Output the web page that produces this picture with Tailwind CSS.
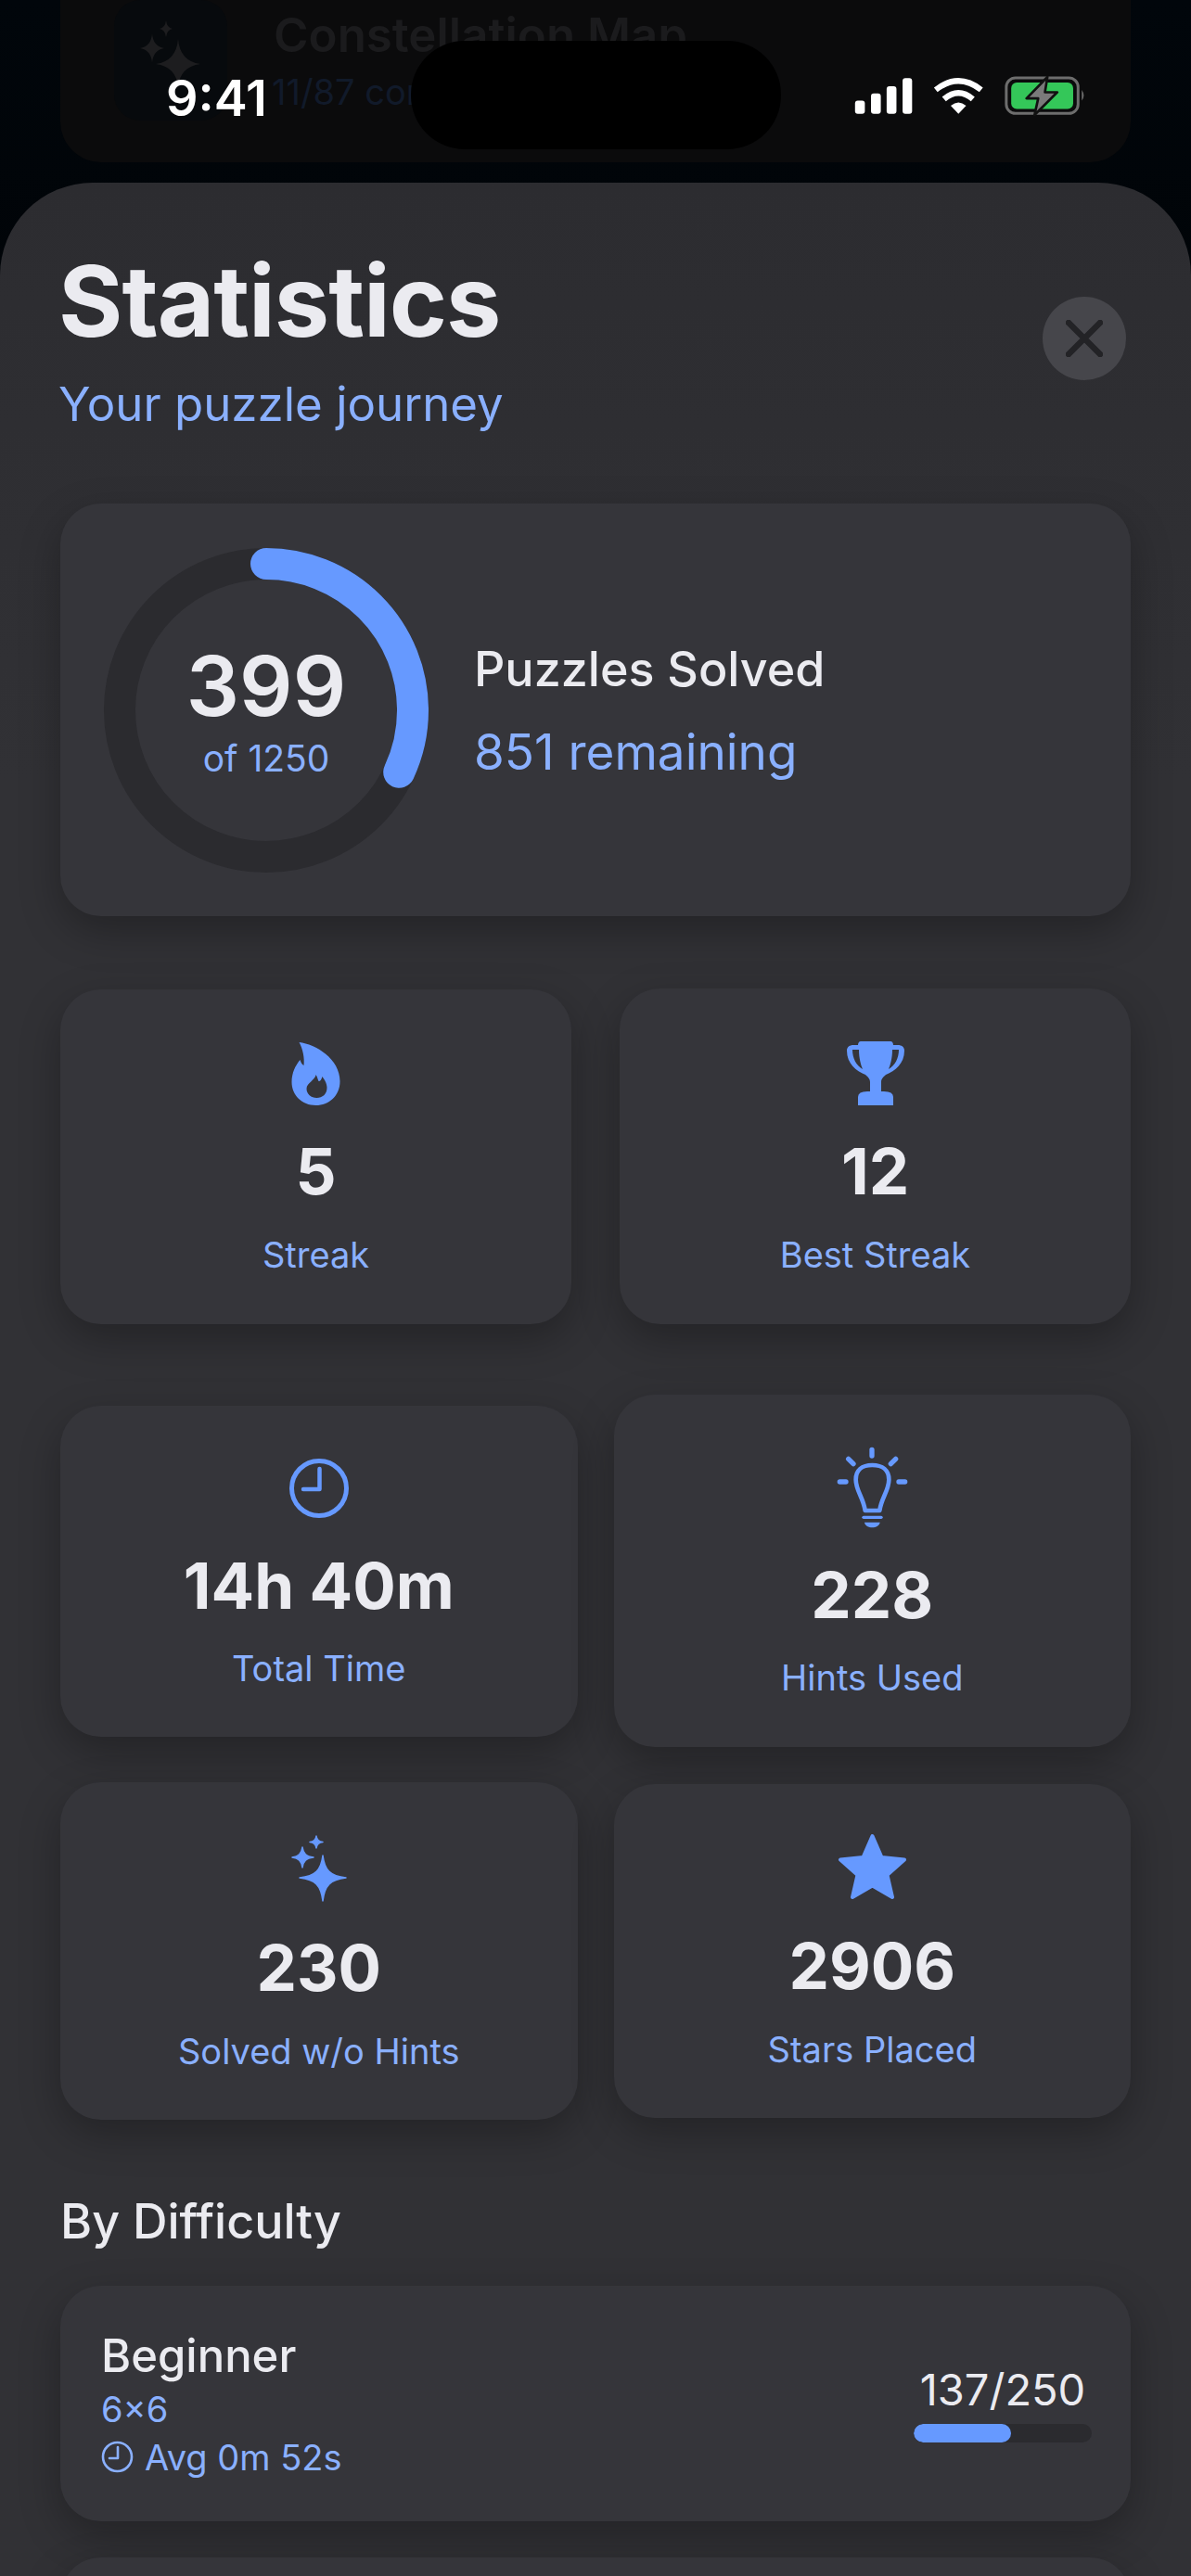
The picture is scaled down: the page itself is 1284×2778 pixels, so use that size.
<!DOCTYPE html>
<html lang="en">
<head>
  <meta charset="UTF-8" />
  <meta name="viewport" content="width=device-width, initial-scale=1" />
  <title>Statistics</title>
  <script src="https://cdn.jsdelivr.net/npm/@tailwindcss/browser@4"></script>
</head>
<body class="bg-black font-['Inter',sans-serif]">
<div class="relative w-[1284px] h-[2778px] overflow-hidden bg-gradient-to-b from-[#01060b] to-[#000000]">

  <!-- Screen behind the sheet -->
  <div class="h-[175px] mx-[65px] bg-[#0b0b0c] rounded-b-[44px] relative overflow-hidden">
    <div class="absolute left-[58px] top-0 w-[122px] h-[130px] rounded-[28px] bg-[#070a0d]"></div>
    <svg class="absolute left-[85px] top-[22px]" width="68" height="72" viewBox="0 0 68 72" fill="#1d1d1f">
      <path d="M42 20 Q44 44 66 47 Q44 50 42 72 Q40 50 18 47 Q40 44 42 20Z"/>
      <path d="M14 14 Q15 28 27 30 Q15 32 14 46 Q13 32 1 30 Q13 28 14 14Z"/>
      <path d="M29 0 Q30 8 36 9 Q30 10 29 18 Q28 10 22 9 Q28 8 29 0Z"/>
    </svg>
    <p class="absolute left-[230px] top-[8px] text-[51px] leading-[60px] font-semibold text-[#1b1b1d] whitespace-nowrap">Constellation Map</p>
    <p class="absolute left-[228px] top-[76px] text-[38px] leading-[46px] text-[#111a2a] whitespace-nowrap">11/87 completed</p>
  </div>

  <!-- Stats sheet -->
  <div class="mt-[22px] h-[2581px] rounded-t-[100px] bg-gradient-to-b from-[#2c2c30] to-[#313135] to-[25%] px-[65px] pt-[78px]">

    <div class="flex justify-between items-start">
      <div class="-ml-[2px]">
        <h1 class="text-[106px] leading-[100px] font-bold text-[#ebebf0] tracking-[-1px]">Statistics</h1>
        <p class="mt-[30px] text-[51px] leading-[62px] text-[#8ab0ff]">Your puzzle journey</p>
      </div>
      <button class="mt-[45px] mr-[5px] w-[90px] h-[90px] rounded-full bg-[#46464b] flex items-center justify-center">
        <svg width="40" height="40" viewBox="0 0 40 40" fill="none" stroke="#232326" stroke-width="6.5" stroke-linecap="round"><path d="M3 3 L37 37 M37 3 L3 37"/></svg>
      </button>
    </div>

    <!-- Solved ring -->
    <section class="mt-[76px] h-[445px] rounded-[44px] bg-[#35353a] shadow-[0_16px_44px_rgba(0,0,0,0.28)] flex items-center pl-[47px]">
      <div class="relative w-[350px] h-[350px]">
        <svg width="350" height="350" viewBox="0 0 350 350" fill="none" stroke-width="34">
          <circle cx="175" cy="175" r="158" stroke="#2b2b2f"/>
          <circle cx="175" cy="175" r="158" stroke="#6699ff" stroke-linecap="round" stroke-dasharray="317 1000" transform="rotate(-90 175 175)"/>
        </svg>
        <div class="absolute inset-0 flex flex-col items-center justify-center">
          <span class="text-[90px] leading-[100px] font-semibold text-[#ebebf0]">399</span>
          <span class="mt-[5px] text-[39px] leading-[46px] text-[#8ab0ff]">of 1250</span>
        </div>
      </div>
      <div class="ml-[49px]">
        <p class="mt-[2px] text-[52px] leading-[62px] font-medium text-[#ebebf0]">Puzzles Solved</p>
        <p class="mt-[27px] text-[53px] leading-[62px] text-[#8ab0ff]">851 remaining</p>
      </div>
    </section>

    <!-- Tile rows -->
    <div class="mt-[78px] grid grid-cols-2 gap-[52px] items-center">
      <div class="h-[361px] rounded-[44px] bg-[#35353a] shadow-[0_16px_44px_rgba(0,0,0,0.28)] flex flex-col items-center pt-[57px]">
        <svg width="53" height="68" viewBox="0 0 52 68" fill="#6699ff" fill-rule="evenodd">
          <path d="M8 0 C26 2 52 18 52 42 C52 58 40 68 26 68 C11 68 0 57 0 43 C0 33 4 25 9 19 C10 22 11 24 13 25 C14 17 12 7 8 0Z M26 35 C26 40 16 44 16 50 C16 56 21 60 27 60 C33 60 38 56 38 49 C38 44 35 40 33 37 C32 40 31 42 29 42 C28 40 28 38 26 35Z"/>
        </svg>
        <p class="mt-[29px] text-[69px] leading-[84px] font-bold text-[#ebebf0]">5</p>
        <p class="mt-[25px] text-[38px] leading-[46px] text-[#8ab0ff]">Streak</p>
      </div>
      <div class="h-[362px] rounded-[44px] bg-[#35353a] shadow-[0_16px_44px_rgba(0,0,0,0.28)] flex flex-col items-center pt-[57px]">
        <svg width="62" height="69" viewBox="0 0 62 69" fill="#6699ff" fill-rule="evenodd">
          <path d="M15 0 H47 C49 0 50 2 50 4 H55 C59 4 62 6 62 10 C62 24 52 32 42 36 C40 38 37 40 37 44 V54 H40 Q50 54 50 60 V69 H12 V60 Q12 54 22 54 H25 V44 C25 40 22 38 20 36 C10 32 0 24 0 10 C0 6 3 4 7 4 H12 C12 2 13 0 15 0Z M6 9 H13 C13 18 15 25 17 30 C10 26 6 18 6 9Z M56 9 H49 C49 18 47 25 45 30 C52 26 56 18 56 9Z"/>
        </svg>
        <p class="mt-[29px] text-[69px] leading-[84px] font-bold text-[#ebebf0]">12</p>
        <p class="mt-[25px] text-[38px] leading-[46px] text-[#8ab0ff]">Best Streak</p>
      </div>
    </div>

    <div class="mt-[76px] grid grid-cols-2 gap-[39px] items-center">
      <div class="h-[357px] rounded-[44px] bg-[#35353a] shadow-[0_16px_44px_rgba(0,0,0,0.28)] flex flex-col items-center pt-[57px]">
        <svg width="64" height="64" viewBox="0 0 64 64" fill="none" stroke="#6699ff" stroke-linecap="round" stroke-linejoin="round">
          <circle cx="32" cy="32" r="29.5" stroke-width="5"/>
          <path d="M32.5 11 V33 H15" stroke-width="4.5"/>
        </svg>
        <p class="mt-[31px] text-[69px] leading-[84px] font-bold text-[#ebebf0]">14h 40m</p>
        <p class="mt-[24px] text-[38px] leading-[46px] text-[#8ab0ff]">Total Time</p>
      </div>
      <div class="h-[380px] rounded-[44px] bg-[#35353a] shadow-[0_16px_44px_rgba(0,0,0,0.28)] flex flex-col items-center pt-[55px]">
        <svg width="79" height="90" viewBox="65 55 237 270" fill="none" stroke="#6699ff" stroke-linecap="round">
          <path d="M182 68 V88 M106 98 L122 114 M259 98 L243 114 M78 172 H98 M269 172 H289" stroke-width="16"/>
          <path d="M160 265 C155 225 130 200 130 165 C130 135 150 118 183 118 C216 118 237 135 237 165 C237 200 212 225 207 265Z" stroke-width="14" stroke-linejoin="round"/>
          <path d="M155 287 H212" stroke-width="10"/>
          <path d="M158 303 H208 C205 325 161 325 158 303Z" fill="#6699ff" stroke="none"/>
        </svg>
        <p class="mt-[29px] text-[69px] leading-[84px] font-bold text-[#ebebf0]">228</p>
        <p class="mt-[24px] text-[38px] leading-[46px] text-[#8ab0ff]">Hints Used</p>
      </div>
    </div>

    <div class="mt-[38px] grid grid-cols-2 gap-[39px] items-center">
      <div class="h-[364px] rounded-[44px] bg-[#35353a] shadow-[0_16px_44px_rgba(0,0,0,0.28)] flex flex-col items-center pt-[57px]">
        <svg width="60" height="72" viewBox="0 0 60 72" fill="#6699ff" stroke="#6699ff" stroke-width="1.5" stroke-linejoin="round">
          <path d="M34 22 C36 38 42 44 59 46 C42 48 36 54 34 71 C32 54 26 48 9 46 C26 44 32 38 34 22Z"/>
          <path d="M12 13 C13 20 16 23 24 24 C16 25 13 28 12 35 C11 28 8 25 1 24 C8 23 11 20 12 13Z"/>
          <path d="M27 1 C27.5 5 29 7 34 7.5 C29 8 27.5 10 27 14 C26.5 10 25 8 20 7.5 C25 7 26.5 5 27 1Z"/>
        </svg>
        <p class="mt-[29px] text-[69px] leading-[84px] font-bold text-[#ebebf0]">230</p>
        <p class="mt-[25px] text-[38px] leading-[46px] text-[#8ab0ff]">Solved w/o Hints</p>
      </div>
      <div class="h-[360px] rounded-[44px] bg-[#35353a] shadow-[0_16px_44px_rgba(0,0,0,0.28)] flex flex-col items-center pt-[53px]">
        <svg width="75" height="72" viewBox="0 0 75 72" fill="#6699ff" stroke="#6699ff" stroke-width="4" stroke-linejoin="round">
          <path d="M37.5 3 L47.5 26 L72 28.5 L53.5 45 L59 69 L37.5 56.5 L16 69 L21.5 45 L3 28.5 L27.5 26Z"/>
        </svg>
        <p class="mt-[29px] text-[69px] leading-[84px] font-bold text-[#ebebf0]">2906</p>
        <p class="mt-[25px] text-[38px] leading-[46px] text-[#8ab0ff]">Stars Placed</p>
      </div>
    </div>

    <!-- Difficulty list -->
    <h2 class="mt-[79px] text-[52px] leading-[62px] font-medium text-[#ebebf0]">By Difficulty</h2>
    <div class="mt-[38px] h-[254px] rounded-[44px] bg-[#35353a] shadow-[0_16px_44px_rgba(0,0,0,0.28)] flex items-center justify-between pl-[44px] pr-[42px]">
      <div>
        <p class="text-[49px] leading-[58px] font-medium text-[#ebebf0]">Beginner</p>
        <p class="text-[38px] leading-[46px] text-[#8ab0ff] mt-[5px]">6×6</p>
        <p class="flex items-center gap-[12px] text-[38px] leading-[46px] text-[#8ab0ff] mt-[6px]">
          <svg width="35" height="35" viewBox="0 0 35 35" fill="none" stroke="#8ab0ff" stroke-width="2.6" stroke-linecap="round" stroke-linejoin="round">
            <circle cx="17.5" cy="17.5" r="15.5"/>
            <path d="M18 7 V19 H9"/>
          </svg>
          Avg 0m 52s
        </p>
      </div>
      <div class="w-[192px] flex flex-col items-center">
        <p class="text-[47px] leading-[52px] text-[#ebebf0] whitespace-nowrap">137/250</p>
        <div class="mt-[11px] w-full h-[20px] rounded-full bg-[#2b2b2f] overflow-hidden">
          <div class="h-full rounded-full bg-[#6699ff]" style="width: 54.8%"></div>
        </div>
      </div>
    </div>
    <div class="mt-[39px] h-[254px] rounded-[44px] bg-[#35353a] shadow-[0_16px_44px_rgba(0,0,0,0.28)]"></div>
  </div>

  <!-- Status bar over everything -->
  <div class="absolute left-[443px] top-[44px] w-[399px] h-[117px] rounded-[58px] bg-black"></div>
  <span class="absolute left-[179px] top-[76px] text-[54px] leading-[60px] font-semibold text-white">9:41</span>
  <svg class="absolute left-[920px] top-[82px]" width="253" height="43" viewBox="120 95 760 130">
    <g fill="#fff">
      <rect x="123" y="175" width="32" height="43" rx="9"/>
      <rect x="175" y="152" width="32" height="66" rx="9"/>
      <rect x="226" y="128" width="32" height="90" rx="9"/>
      <rect x="278" y="102" width="31" height="116" rx="9"/>
      <path d="M460 218 L435 192 Q460 170 485 192Z"/>
    </g>
    <g fill="none" stroke="#fff" stroke-width="19">
      <path d="M413 170 Q460 130 507 170"/>
      <path d="M386 140 Q460 82 534 140"/>
    </g>
    <rect x="616" y="101" width="234" height="116" rx="30" fill="none" stroke="#6d6d6d" stroke-width="9"/>
    <rect x="632" y="116" width="202" height="86" rx="18" fill="#34c759"/>
    <path d="M750 98 L682 168 H720 L708 222 L782 148 H742Z" fill="#7a7a7a" stroke="#111" stroke-width="8" stroke-linejoin="round"/>
    <path d="M862 140 Q875 158 862 175Z" fill="#6d6d6d"/>
  </svg>
</div>
</body>
</html>
